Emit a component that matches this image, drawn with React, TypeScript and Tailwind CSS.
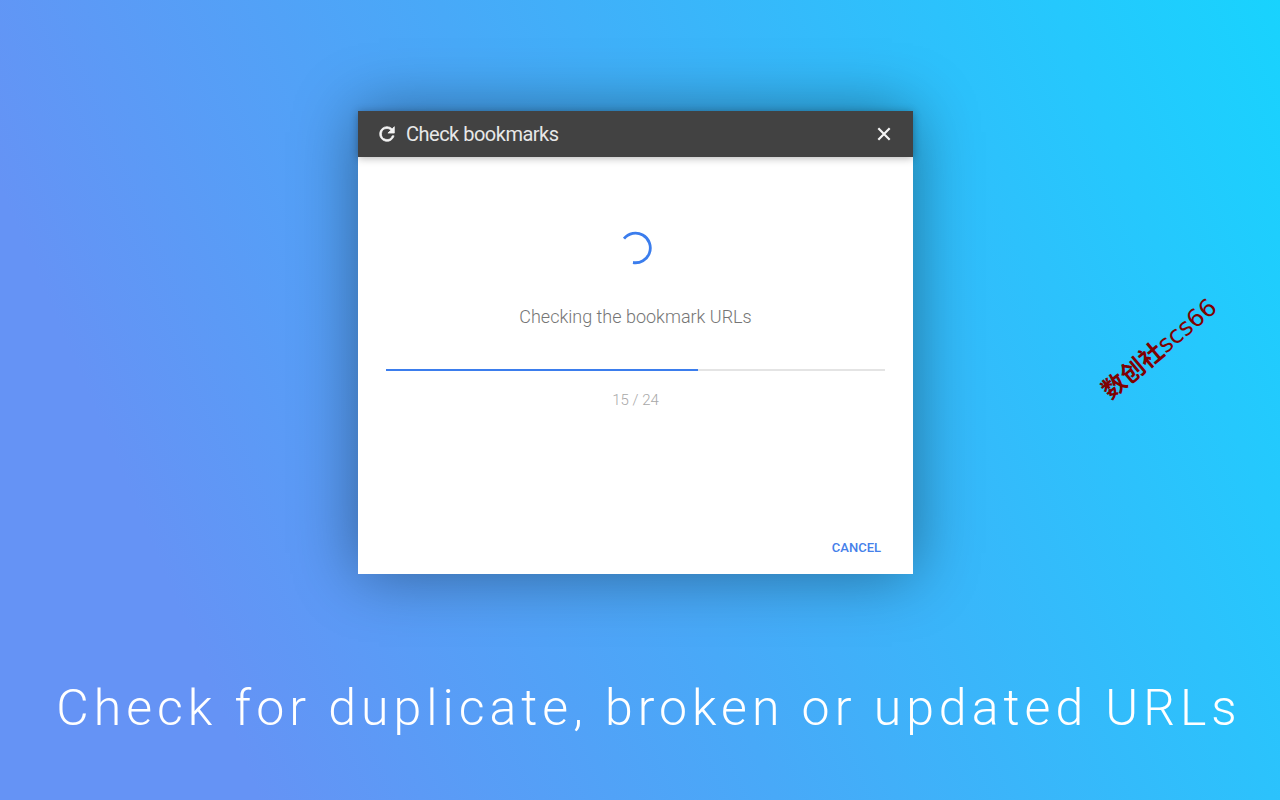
const checked = 15;
const total = 24;

const RefreshIcon = () => (
  <svg viewBox="0 0 24 24" className="w-[22px] h-[22px]" aria-hidden="true">
    <path
      d="M17.65 6.35A7.96 7.96 0 0 0 12 4a8 8 0 1 0 7.73 10h-2.08A6 6 0 1 1 12 6c1.66 0 3.14.69 4.22 1.78L13 11h7V4z"
      fill="currentColor"
      stroke="currentColor"
      strokeWidth="0.8"
    />
  </svg>
);

const CloseIcon = () => (
  <svg viewBox="0 0 24 24" className="w-[22px] h-[22px]" aria-hidden="true">
    <path d="M5.8 5.8 18.2 18.2M18.2 5.8 5.8 18.2" fill="none" stroke="currentColor" strokeWidth="2.4" />
  </svg>
);

const Spinner = () => (
  <svg viewBox="0 0 34 34" className="w-[34px] h-[34px]" role="img" aria-label="Loading">
    <path
      d="M5 7.6 A14.8 14.8 0 1 1 14 31.5"
      fill="none"
      stroke="#3b7ded"
      strokeWidth="2.8"
    />
  </svg>
);

const ProgressBar = ({ value, max }: { value: number; max: number }) => (
  <div
    role="progressbar"
    aria-label="Checked bookmarks"
    aria-valuenow={value}
    aria-valuemin={0}
    aria-valuemax={max}
    className="w-full h-[2px] bg-[#e4e4e4]"
  >
    <div className="h-full bg-[#3b7ded]" style={{ width: `${(value / max) * 100}%` }}></div>
  </div>
);

const CheckDialog = () => (
  <section className="w-[555px] max-w-full bg-white shadow-[0_0_60px_rgba(0,0,0,0.4)]">
    <header className="h-[46px] px-[18px] flex items-center gap-2 bg-[#424242] text-[#f5f5f5] shadow-[0_1px_8px_rgba(0,0,0,0.3)]">
      <RefreshIcon />
      <h2 className="flex-1 text-[20px] leading-6 tracking-tight text-[#e8e8e8]">Check bookmarks</h2>
      <button type="button" aria-label="Close">
        <CloseIcon />
      </button>
    </header>

    <div className="px-7 pt-[74px] flex flex-col items-center">
      <Spinner />
      <p className="mt-10 mb-10 text-[18px] leading-6 font-light text-[#757575]">Checking the bookmark URLs</p>
      <ProgressBar value={checked} max={total} />
      <p className="mt-[17px] text-[15px] leading-6 font-light text-[#a8a8a8]">
        {checked} / {total}
      </p>
    </div>

    <footer className="pt-[118px] pb-2 px-6 flex justify-end">
      <button type="button" className="h-9 px-2 text-[13px] font-medium text-[#4580ea]">
        CANCEL
      </button>
    </footer>
  </section>
);

const App = () => {
  return (
    <main className="relative min-h-screen overflow-hidden pt-[111px] flex flex-col font-['Roboto',sans-serif] bg-[linear-gradient(67deg,#6593f5_0%,#6593f5_16%,#48a9f8_48%,#25c8fd_86%,#18d3fe_100%)]">
      <div className="flex justify-center pr-[9px]">
        <CheckDialog />
      </div>

      <h1 className="mt-[104px] pl-[18px] text-center text-[50px] leading-[60px] font-light tracking-widest text-white">
        Check for duplicate, broken or updated URLs
      </h1>

      <span className="absolute right-[50px] top-[333px] -rotate-40 whitespace-nowrap text-[24px] leading-8 text-[#800000] font-['DejaVu_Sans','Noto_Sans_CJK_SC',sans-serif]">
        <b>数创社</b>scs66
      </span>
    </main>
  );
};

export default App;
